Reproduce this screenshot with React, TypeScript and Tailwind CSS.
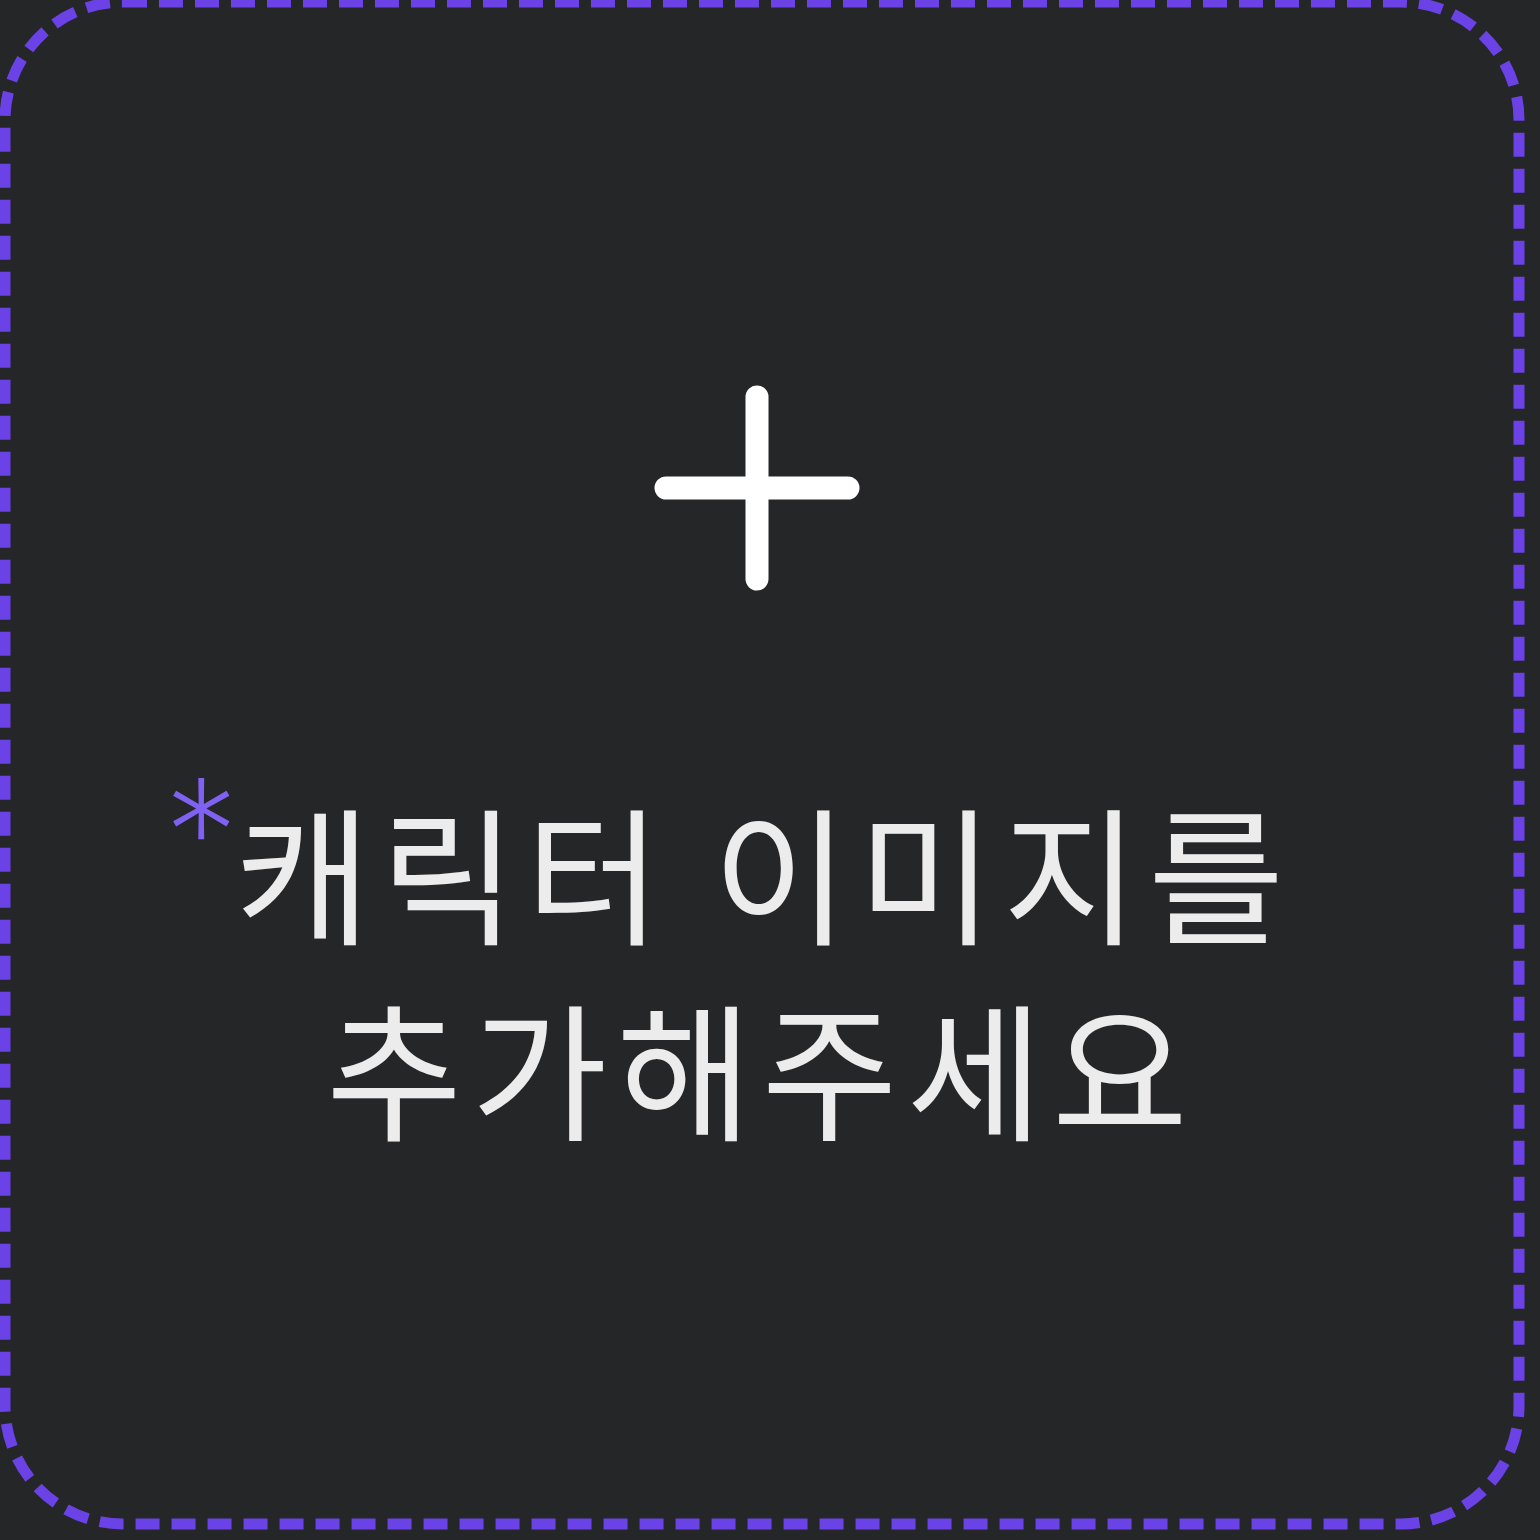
import React from "react";

export default function App() {
  return (
    <div className="relative w-[1540px] h-[1540px] bg-[#252628] flex flex-col items-center pr-[26px] overflow-hidden">
      <svg
        className="absolute inset-0 pointer-events-none"
        width="1540"
        height="1540"
        viewBox="0 0 1540 1540"
      >
        <rect
          x="5"
          y="2"
          width="1514"
          height="1522"
          rx="118"
          ry="118"
          fill="none"
          stroke="#6a42e6"
          strokeWidth="11"
          strokeDasharray="24 12"
          strokeLinecap="butt"
        />
      </svg>

      <svg
        className="mt-[385px] shrink-0"
        width="206"
        height="206"
        viewBox="0 0 206 206"
      >
        <path
          d="M103 12 V194 M12 103 H194"
          stroke="#ffffff"
          strokeWidth="23"
          strokeLinecap="round"
          fill="none"
        />
      </svg>

      <div
        className="mt-[180px] flex flex-col items-center text-[148px] leading-[196px] tracking-[9px] text-[#ececec] font-normal whitespace-nowrap"
        style={{ fontFamily: '"Noto Sans CJK KR", "Noto Sans", sans-serif' }}
      >
        <span className="relative pl-[14px]">
          <span
            className="absolute right-[calc(100%-18px)] top-[-18px] text-[150px] leading-[160px] tracking-normal font-extralight text-[#8062f2]"
            style={{ fontFamily: "Inter, sans-serif" }}
          >
            *
          </span>
          캐릭터 이미지를
        </span>
        <span className="pl-[9px]">추가해주세요</span>
      </div>
    </div>
  );
}
